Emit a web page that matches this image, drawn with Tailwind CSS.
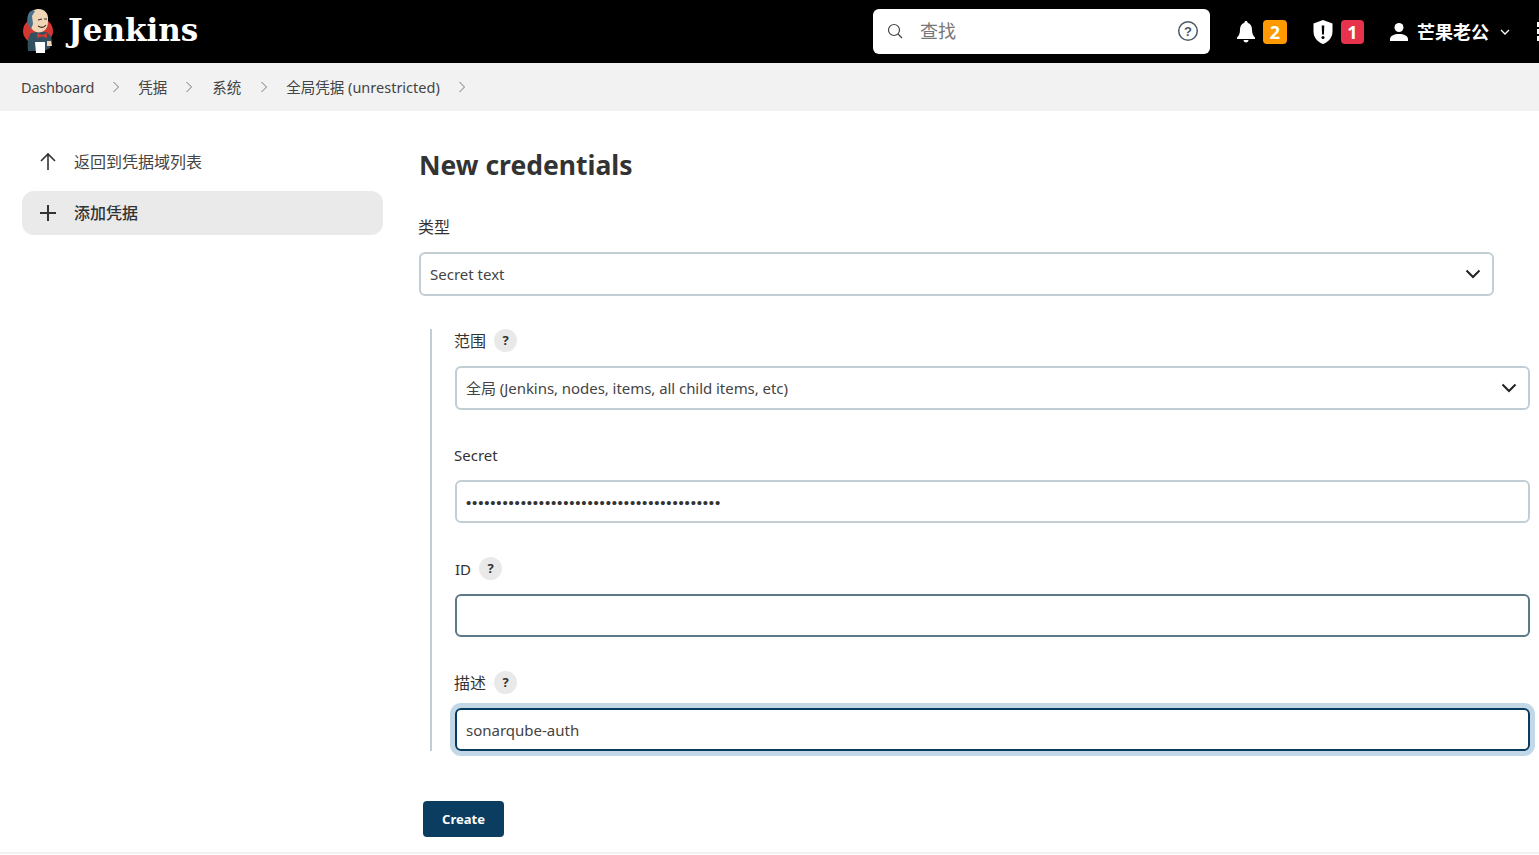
<!DOCTYPE html>
<html lang="zh"><head><meta charset="utf-8"><title>Jenkins</title>
<script src="https://cdn.jsdelivr.net/npm/@tailwindcss/browser@4"></script></head>
<body class="h-[855px] overflow-hidden bg-white text-[#333] font-['Noto_Sans','Noto_Sans_CJK_SC',sans-serif]">
<header class="h-[63px] bg-black flex items-center text-white">
  <div class="flex items-center pl-[22px] w-[873px] shrink-0">
    <svg class="w-[33px] h-[46px] mt-[1px]" viewBox="0 0 33 46">
      <ellipse cx="16" cy="22" rx="15" ry="13.500" fill="#d33833"/>
      <path d="M6 42c-1-8 0-14 3-18l6-1 9 0c4 2 6 6 6 10l-2 6-6 3z" fill="#335061"/>
      <path d="M7 7c1-5 5-7 10-7s9 4 9 9 0 9-3 12c-3 3-8 3-11 1C8 19 6 13 7 7z" fill="#f0d6b7"/>
      <path d="M7 4C4 9 5 15 9 20l2-5-1-8 3-5c-3-1-5 0-6 2z" fill="#49728b"/>
      <path d="M16 11l4-1M22 10l3 0M16 17c3 2 6 2 8-1" stroke="#3d2b20" stroke-width="1.100" fill="none"/>
      <path d="M15 24l5 2 5-2 0 5-5-1.500-5 1.500z" fill="#d33833"/>
      <path d="M13 33l10 0 0 11-9 0z" fill="#fff"/>
      <path d="M25 32h4l1 5h-5z" fill="#f0d6b7"/>
    </svg>
    <span class="ml-[13px] -mt-[3px] text-[31px] leading-none font-bold font-['DejaVu_Serif',serif]">Jenkins</span>
  </div>
  <div class="w-[337px] h-[45px] mt-[-1px] bg-white rounded-[6px] shrink-0 flex items-center pl-[14px] pr-[11px]">
    <svg class="w-[18px] h-[18px] text-[#444]" viewBox="0 0 18 18" fill="none" stroke="currentColor" stroke-width="1.200"><circle cx="7" cy="8" r="5.500"/><path d="M11 12l4 4"/></svg>
    <span class="ml-[15px] text-[18px] text-[#777] flex-1">查找</span>
    <svg class="w-[22px] h-[22px] text-[#4a5a68]" viewBox="0 0 22 22" fill="none" stroke="currentColor" stroke-width="1.500"><circle cx="11" cy="11" r="9.300"/><text x="11" y="15.500" text-anchor="middle" font-size="13" font-weight="700" fill="currentColor" stroke="none" font-family="Liberation Sans">?</text></svg>
  </div>
  <div class="flex items-center ml-[25px] shrink-0">
    <svg class="w-[22px] h-[24px] mt-[1px]" viewBox="0 0 22 24" fill="#fff"><path d="M11 1c1 0 1.600.7 1.600 1.700 3 .9 4.400 3.500 4.400 6.800 0 4 1 6 3 8v1.500H2V17.500c2-2 3-4 3-8 0-3.300 1.400-5.900 4.400-6.800C9.400 1.700 10 1 11 1zM8.500 20h5c0 1.500-1 2.500-2.500 2.500S8.500 21.500 8.500 20z"/></svg>
    <span class="ml-[6px] w-[24px] h-[24px] rounded-[4px] bg-[#fe9a00] text-white text-[18px] font-bold flex items-center justify-center leading-none">2</span>
    <svg class="ml-[25px] w-[22px] h-[26px]" viewBox="0 0 22 26"><path d="M11 1l9.500 3.500v8c0 6-4 10.500-9.500 12.500C5.500 23 1.500 18.500 1.500 12.500v-8z" fill="#fff"/><path d="M9.700 6.500h2.600l-.4 9h-1.800z" fill="#000"/><circle cx="11" cy="18.500" r="1.500" fill="#000"/></svg>
    <span class="ml-[7px] w-[23px] h-[24px] rounded-[4px] bg-[#e6324b] text-white text-[18px] font-bold flex items-center justify-center leading-none">1</span>
    <svg class="ml-[24px] w-[22px] h-[22px]" viewBox="0 0 22 22" fill="#fff"><circle cx="11" cy="6.500" r="4.500"/><path d="M2 20v-2c0-3 4-5 9-5s9 2 9 5v2z"/></svg>
    <span class="ml-[7px] text-[18px] font-bold leading-none">芒果老公</span>
    <svg class="ml-[9px] w-[14px] h-[14px]" viewBox="0 0 14 14" fill="none" stroke="#fff" stroke-width="1.300"><path d="M3 5l4 4 4-4"/></svg>
    <span class="ml-[25px] flex flex-col gap-[2px]"><i class="block w-[8px] h-[5px] bg-white"></i><i class="block w-[8px] h-[5px] bg-white"></i><i class="block w-[8px] h-[5px] bg-white"></i></span>
  </div>
</header>
<nav class="h-[48px] bg-[#f2f2f2] flex items-center pl-[21px] text-[14.5px] text-[#444]">
  <span class="tracking-[-0.2px] pt-[1px]">Dashboard</span>
  <svg class="mx-[15px] w-[14px] h-[14px] text-[#777]" viewBox="0 0 14 14" fill="none" stroke="currentColor" stroke-width="1"><path d="M4.500 2l5 5-5 5"/></svg>
  <span class="pt-[1px]">凭据</span>
  <svg class="ml-[15px] mr-[16px] w-[14px] h-[14px] text-[#777]" viewBox="0 0 14 14" fill="none" stroke="currentColor" stroke-width="1"><path d="M4.500 2l5 5-5 5"/></svg>
  <span class="pt-[1px]">系统</span>
  <svg class="ml-[16px] mr-[15px] w-[14px] h-[14px] text-[#777]" viewBox="0 0 14 14" fill="none" stroke="currentColor" stroke-width="1"><path d="M4.500 2l5 5-5 5"/></svg>
  <span class="pt-[1px]">全局凭据 (unrestricted)</span>
  <svg class="mx-[15px] w-[14px] h-[14px] text-[#777]" viewBox="0 0 14 14" fill="none" stroke="currentColor" stroke-width="1"><path d="M4.500 2l5 5-5 5"/></svg>
</nav>
<div class="flex h-[743px] border-b-2 border-[#f1f1f1]">
  <aside class="w-[419px] shrink-0 pl-[22px] pr-[36px] pt-[29px] text-[16px] text-[#444]">
    <div class="h-[44px] flex items-center pl-[14px] rounded-[12px]">
      <svg class="w-[24px] h-[24px]" viewBox="0 0 24 24" fill="none" stroke="#333" stroke-width="1.600"><path d="M12 20V4M5 11l7-7 7 7"/></svg>
      <span class="ml-[14px]">返回到凭据域列表</span>
    </div>
    <div class="mt-[7px] h-[44px] flex items-center pl-[14px] rounded-[12px] bg-[#eaeaea] font-medium text-[#333]">
      <svg class="w-[24px] h-[24px]" viewBox="0 0 24 24" fill="none" stroke="#333" stroke-width="2"><path d="M12 4v16M4 12h16"/></svg>
      <span class="ml-[14px]">添加凭据</span>
    </div>
  </aside>
  <main class="flex-1 min-w-0 text-[15px]">
    <h1 class="mt-[35px] h-[38px] text-[26.500px] leading-[38px] font-bold text-[#333]">New credentials</h1>
    <div class="mt-[31px] h-[24px] leading-[24px] text-[16px] -ml-[1px]">类型</div>
    <div class="mt-[13px] w-[1075px] h-[44px] border-2 border-[#c3ced4] rounded-[6px] flex items-center pl-[9px] pr-[11px] justify-between text-[#444]">
      <span>Secret text</span>
      <svg class="w-[16px] h-[16px]" viewBox="0 0 16 16" fill="none" stroke="#222" stroke-width="2"><path d="M1.500 4.500L8 11l6.500-6.500"/></svg>
    </div>
    <div class="mt-[33px] ml-[11px] border-l-2 border-[#c3ced4] pl-[23px] w-[1100px] h-[422px]">
      <div class="h-[24px] flex items-center">
        <span class="text-[16px] -ml-[1px]">范围</span>
        <span class="ml-[8px] w-[23px] h-[23px] rounded-full bg-[#e9e9e9] flex items-center justify-center text-[13px] font-bold -mt-[2px] pt-[1px]">?</span>
      </div>
      <div class="mt-[13px] w-[1075px] h-[44px] border-2 border-[#c3ced4] rounded-[6px] flex items-center pl-[9px] pr-[11px] justify-between text-[#444]">
        <span class="tracking-[-0.05px]">全局 (Jenkins, nodes, items, all child items, etc)</span>
        <svg class="w-[16px] h-[16px]" viewBox="0 0 16 16" fill="none" stroke="#222" stroke-width="2"><path d="M1.500 4.500L8 11l6.500-6.500"/></svg>
      </div>
      <div class="mt-[33px] h-[24px] leading-[24px] -ml-[1px]">Secret</div>
      <div class="mt-[13px] w-[1075px] h-[43px] border-2 border-[#c3ced4] rounded-[6px] flex items-center pl-[9px] pt-[3px] overflow-hidden text-[#333] tracking-[0.82px] font-['Liberation_Sans',sans-serif]">••••••••••••••••••••••••••••••••••••••••••</div>
      <div class="mt-[34px] h-[24px] flex items-center">
        <span>ID</span>
        <span class="ml-[8px] w-[23px] h-[23px] rounded-full bg-[#e9e9e9] flex items-center justify-center text-[13px] font-bold -mt-[2px] pt-[1px]">?</span>
      </div>
      <div class="mt-[13px] w-[1075px] h-[43px] border-2 border-[#5d7887] rounded-[6px]"></div>
      <div class="mt-[34px] h-[24px] flex items-center">
        <span class="text-[16px] -ml-[1px]">描述</span>
        <span class="ml-[8px] w-[23px] h-[23px] rounded-full bg-[#e9e9e9] flex items-center justify-center text-[13px] font-bold -mt-[2px] pt-[1px]">?</span>
      </div>
      <div class="mt-[13px] w-[1075px] h-[43px] border-2 border-[#063c60] rounded-[6px] shadow-[0_0_0_5px_#c2d8e7] flex items-center pl-[9px] pt-[1px] text-[#444]">sonarqube-auth</div>
    </div>
    <button class="mt-[50px] ml-[4px] w-[81px] h-[36px] bg-[#0b3d60] rounded-[4px] text-white text-[13px] font-bold pt-[2px]">Create</button>
  </main>
</div>
</body></html>
